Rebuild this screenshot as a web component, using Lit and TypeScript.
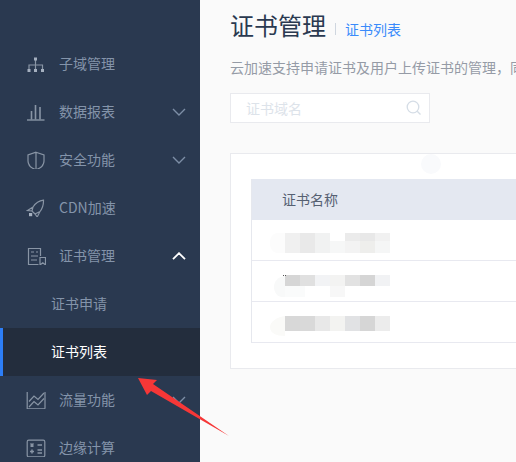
import { LitElement, html, css, svg } from "lit";
import { customElement } from "lit/decorators.js";

const ICONS: Record<string, unknown> = {
  tree: svg`<path d="M9.5 5V10M3 14V10H16.5V14M9.5 10V14" fill="none"/><g class="fill"><rect x="8" y="2.5" width="3" height="3"/><rect x="1.5" y="14" width="3" height="3"/><rect x="8" y="14" width="3" height="3"/><rect x="15" y="14" width="3" height="3"/></g>`,
  bars: svg`<path d="M1 17H18.5" stroke-width="1.4" fill="none"/><path d="M5.5 8V16.5M9.5 2V16.5M14 4V16.5" stroke-width="1.6" fill="none"/>`,
  shield: svg`<path d="M10 1.2L18 4V10C18 14.5 13.5 17.5 10 18.8C6.5 17.5 2 14.5 2 10V4ZM10 1.2V18.8" fill="none"/>`,
  rocket: svg`<path d="M17.5 1.2C12.5 1.8 9.2 4.6 7 8L1.5 11.5L6 12L9 15L11.2 18L14 12.5C16.4 9.5 17.6 6 17.5 1.2ZM7 8L6 12M14 12.5L9 15" fill="none"/><rect class="fill" x="3" y="14" width="3.2" height="3.2"/>`,
  cert: svg`<path d="M14.5 9V1.5H2.5V17.5H12.5M5 5H8M10 5H12M5 9H12M5 13H11" fill="none"/><path d="M14 10.5H19.5V18L16.8 15.8L14 18Z" fill="none"/>`,
  chart: svg`<path d="M1.2 1V17.8H19M19 1V17.8" fill="none"/><path d="M3 10.5L8 5L12 8.5L18 2M3 16L8 10.5L12 14L18 7.5" fill="none"/>`,
  calc: svg`<rect x="1.2" y="1.2" width="17.6" height="16.6" rx="1.5" fill="none"/><path d="M4.5 4.5L7.5 7.5M7.5 4.5L4.5 7.5M11.5 6H16M4 12.5H8M6 10.5V14.5M11.5 11H16M11.5 14H16" fill="none" stroke-width="1.5"/>`,
};

interface MenuItem { label: string; icon?: string; chevron?: "down" | "up"; active?: boolean; sub?: boolean; }

const MENU: MenuItem[] = [
  { label: "子域管理", icon: "tree" },
  { label: "数据报表", icon: "bars", chevron: "down" },
  { label: "安全功能", icon: "shield", chevron: "down" },
  { label: "CDN加速", icon: "rocket" },
  { label: "证书管理", icon: "cert", chevron: "up" },
  { label: "证书申请", sub: true },
  { label: "证书列表", sub: true, active: true },
  { label: "流量功能", icon: "chart", chevron: "down" },
  { label: "边缘计算", icon: "calc" },
];

type Cell = [number, number, number, number, string];
const cols = [15, 30, 45, 60, 75, 90, 105];
const cells = (y: number, h: number, colours: string[]): Cell[] =>
  colours.map((c, i): Cell => [cols[i], y, 15, h, c]);

const MOSAIC: { blob: string; blobColour: string; cells: Cell[] }[] = [
  {
    blob: "M15 13H8C3 13 0 17 0 23C0 29 3 33 8 33H15Z",
    blobColour: "#fcfcfc",
    cells: [
      ...cells(13, 20, ["#f0f0f0", "#e9e9e9", "#f1f2f2"]),
      [60, 21, 15, 12, "#f6f7f7"],
      [75, 13, 15, 8, "#ebebeb"], [75, 21, 15, 12, "#f3f3f3"],
      [90, 13, 15, 8, "#e8e8e8"], [90, 21, 15, 12, "#eeeeec"],
      [105, 13, 15, 8, "#f1f1f1"], [105, 21, 15, 12, "#f5f6f6"],
    ],
  },
  {
    blob: "M15 15C8 16 4 20 4 26C4 32 8 36 12 36H15Z",
    blobColour: "#f8f9f9",
    cells: [
      ...cells(14, 11, ["#d6d6d6", "#e0e0e0", "#f2f3f5", "#f3f3f2", "#e2e2e2", "#d5d5d5", "#f1f2f4"]),
      [15, 25, 20, 11, "#fafbfb"],
      [60, 25, 15, 11, "#f7f7f7"],
      [13, 14, 1, 1, "#555"], [15, 14, 1, 1, "#555"],
    ],
  },
  {
    blob: "M15 14C8 15 0 19 0 25C0 31 6 34 15 34Z",
    blobColour: "#fafaf8",
    cells: cells(14, 15, ["#d8d8d8", "#d9d9d9", "#e8e8e8", "#f3f3f1", "#e1e2e4", "#d6d6d6", "#ececec"]),
  },
];

@customElement("app-root")
export class AppRoot extends LitElement {
  static styles = css`
    :host {
      display: flex;
      position: relative;
      width: 516px;
      height: 462px;
      overflow: hidden;
      background: #fafafa;
      font-family: "Noto Sans CJK SC", "Liberation Sans", sans-serif;
      font-size: 14px;
    }
    .sidebar {
      flex: none;
      width: 200px;
      height: 462px;
      padding-top: 40px;
      box-sizing: border-box;
      overflow: hidden;
      background: #2a3950;
    }
    .item {
      display: flex;
      align-items: center;
      height: 48px;
      padding: 0 14px 0 26px;
      box-sizing: border-box;
      color: #8494aa;
    }
    .item span { padding-bottom: 2px; }
    .item.sub { padding-left: 51px; }
    .item.active {
      background: #232d3d;
      box-shadow: inset 3px 0 0 #2d7ef7;
      color: #fff;
    }
    .icon {
      flex: none;
      width: 20px;
      height: 18px;
      margin-right: 13px;
      stroke: #8995a5;
      stroke-width: 1.2;
    }
    .icon .fill { fill: #a5b0bf; stroke: none; }
    .chev {
      flex: none;
      margin-left: auto;
      width: 14px;
      height: 8px;
      fill: none;
      stroke: #7d8ea6;
      stroke-width: 1.4;
    }
    .chev.up { stroke: #fff; stroke-width: 1.8; }
    .main {
      flex: none;
      width: 316px;
      padding-left: 30px;
      box-sizing: border-box;
      overflow: hidden;
    }
    .head {
      display: flex;
      align-items: center;
      height: 54px;
      white-space: nowrap;
    }
    .title { font-size: 24px; color: #2a3950; padding-bottom: 5px; }
    .sep {
      width: 1px;
      height: 12px;
      margin: 3px 9px 0;
      background: #cfd6df;
    }
    .crumb { margin-top: 3px; color: #3a8bfb; }
    .desc {
      margin-top: 3px;
      padding-bottom: 1px;
      line-height: 20px;
      white-space: nowrap;
      color: #959ba6;
    }
    .search {
      display: flex;
      align-items: center;
      width: 200px;
      height: 30px;
      margin-top: 15px;
      padding: 0 7px 0 15px;
      box-sizing: border-box;
      background: #fff;
      border: 1px solid #e9eaee;
    }
    .search input {
      flex: 1;
      min-width: 0;
      border: 0;
      padding: 0;
      outline: 0;
      background: transparent;
      font: inherit;
    }
    .search input::placeholder { color: #dde3ea; opacity: 1; }
    .search svg { flex: none; width: 16px; height: 16px; fill: none; stroke: #d5dde6; stroke-width: 1.3; }
    .card {
      position: relative;
      width: 500px;
      margin-top: 30px;
      padding: 25px 0 25px 20px;
      box-sizing: border-box;
      background: #fff;
      border: 1px solid #e9eaee;
    }
    .dot {
      position: absolute;
      left: 190px;
      top: 0;
      width: 20px;
      height: 20px;
      border-radius: 50%;
      background: #f9fafc;
    }
    .table { border-left: 1px solid #e6e8ee; }
    .thead {
      display: flex;
      align-items: center;
      height: 41px;
      padding: 0 0 2px 30px;
      box-sizing: border-box;
      background: #e4e8f1;
      color: #566072;
    }
    .row {
      height: 40px;
      border-bottom: 1px solid #e8e9f0;
    }
    .row svg { display: block; margin-left: 18px; width: 120px; height: 40px; }
    .arrow {
      position: absolute;
      left: 130px;
      top: 370px;
      width: 105px;
      height: 70px;
      fill: #f63737;
      pointer-events: none;
    }
  `;

  render() {
    return html`
      <nav class="sidebar">
        ${MENU.map((m) => html`
          <div class="item ${m.sub ? "sub" : ""} ${m.active ? "active" : ""}">
            ${m.icon ? html`<svg class="icon" viewBox="0 0 20 18">${ICONS[m.icon]}</svg>` : ""}
            <span>${m.label}</span>
            ${m.chevron ? html`<svg class="chev ${m.chevron}" viewBox="0 0 14 8">
              <path d=${m.chevron === "up" ? "M1 7.2L7 1.2L13 7.2" : "M1 1L7 7L13 1"}/>
            </svg>` : ""}
          </div>`)}
      </nav>
      <main class="main">
        <div class="head">
          <span class="title">证书管理</span>
          <span class="sep"></span>
          <span class="crumb">证书列表</span>
        </div>
        <div class="desc">云加速支持申请证书及用户上传证书的管理，同时支持</div>
        <div class="search">
          <input placeholder="证书域名" />
          <svg viewBox="0 0 16 16"><circle cx="7" cy="7" r="5.8"/><path d="M11.2 11.2L14.5 14.5"/></svg>
        </div>
        <section class="card">
          <div class="dot"></div>
          <div class="table">
            <div class="thead">证书名称</div>
            ${MOSAIC.map((r) => html`
              <div class="row">
                <svg viewBox="0 0 120 40">
                  <path d=${r.blob} fill=${r.blobColour}/>
                  ${r.cells.map(([x, y, w, h, c]) => svg`<rect x=${x} y=${y} width=${w} height=${h} fill=${c}/>`)}
                </svg>
              </div>`)}
          </div>
        </section>
      </main>
      <svg class="arrow" viewBox="0 0 105 70">
        <polygon points="8,8 27,10 23,14 99,66 21,21 17,25"/>
      </svg>
    `;
  }
}
